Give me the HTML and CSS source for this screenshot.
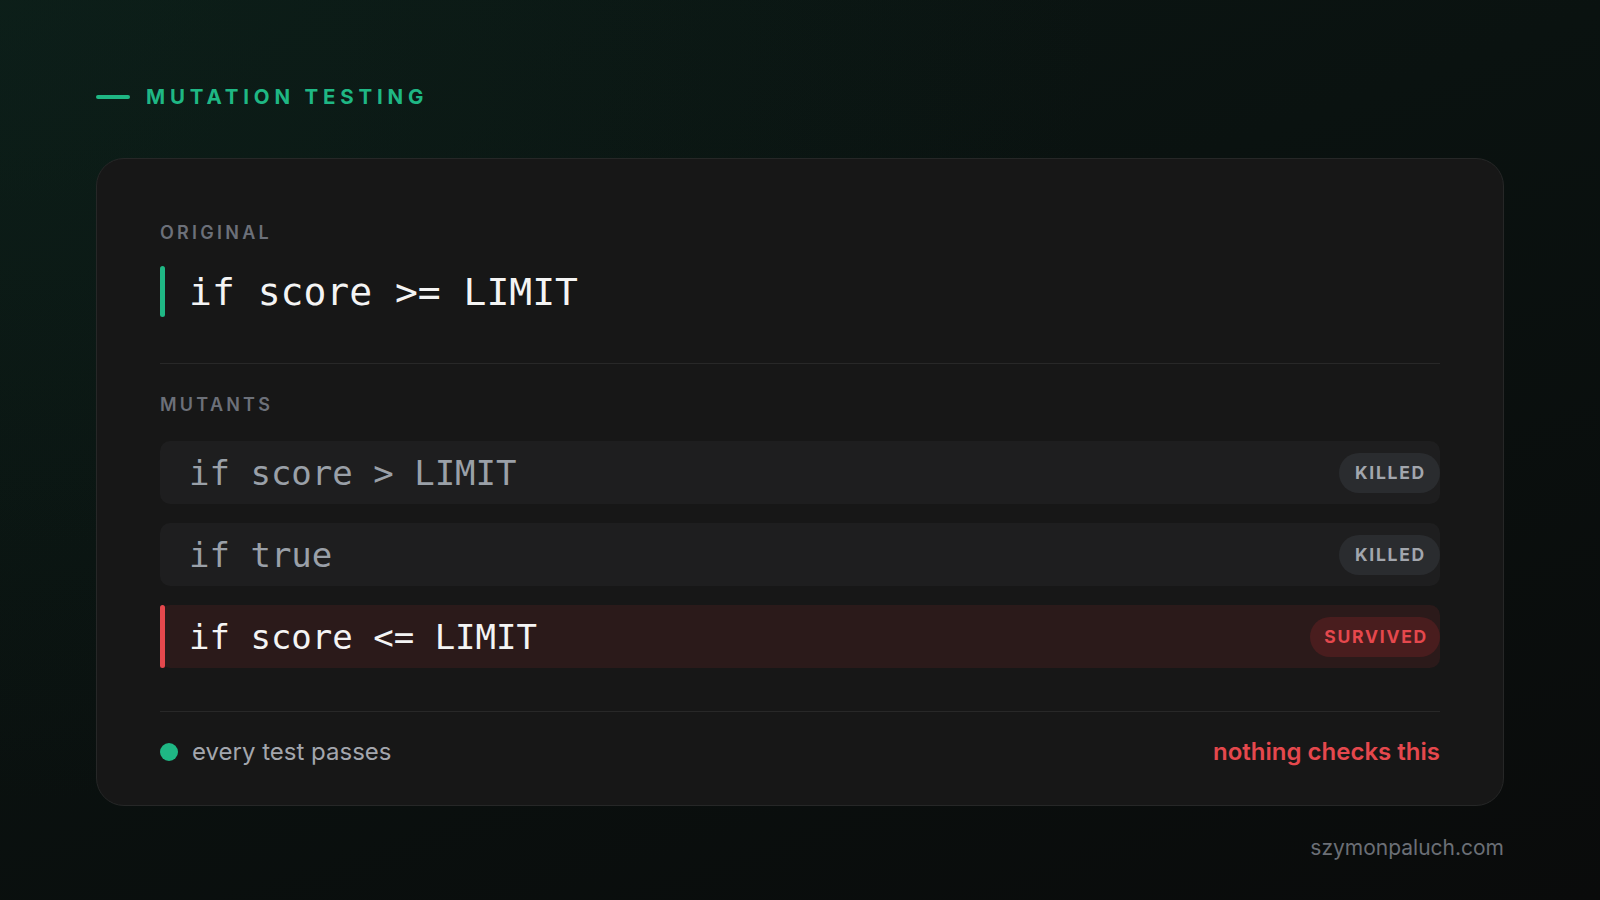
FILE: index.html
```html
<!DOCTYPE html>
<html lang="en">
<head>
<meta charset="utf-8">
<title>Mutation testing</title>
<link rel="stylesheet" href="styles.css">
</head>
<body>
<div class="page">
  <header class="heading">
    <span class="heading-line"></span>
    <span class="heading-text">MUTATION TESTING</span>
  </header>

  <section class="card">
    <div class="label">ORIGINAL</div>
    <div class="original">
      <span class="bar bar-green"></span>
      <code class="code code-lg">if score &gt;= LIMIT</code>
    </div>

    <hr class="divider divider-top">

    <div class="label">MUTANTS</div>
    <div class="mutants">
      <div class="mutant">
        <span class="bar"></span>
        <code class="code code-md muted">if score &gt; LIMIT</code>
        <span class="badge badge-killed">KILLED</span>
      </div>
      <div class="mutant">
        <span class="bar"></span>
        <code class="code code-md muted">if true</code>
        <span class="badge badge-killed">KILLED</span>
      </div>
      <div class="mutant mutant-survived">
        <span class="bar bar-red"></span>
        <code class="code code-md">if score &lt;= LIMIT</code>
        <span class="badge badge-survived">SURVIVED</span>
      </div>
    </div>

    <hr class="divider divider-bottom">

    <div class="status">
      <div class="status-left">
        <span class="dot"></span>
        <span class="status-text">every test passes</span>
      </div>
      <div class="status-warn">nothing checks this</div>
    </div>
  </section>

  <footer class="site">szymonpaluch.com</footer>
</div>
</body>
</html>
```

FILE: styles.css
```css
* { box-sizing: border-box; }

html, body {
  margin: 0;
  padding: 0;
  width: 1600px;
  height: 900px;
  overflow: hidden;
}

body {
  font-family: Inter, "Noto Sans", "Liberation Sans", sans-serif;
  background:
    radial-gradient(ellipse 1100px 800px at 0% 0%, rgba(14, 40, 31, 0.45), rgba(14, 40, 31, 0) 100%),
    linear-gradient(160deg, #0b1714 0%, #0a1210 40%, #0a0b0b 100%);
  color: #f2f2f2;
}

.page {
  width: 1600px;
  height: 900px;
  padding: 85px 96px 0;
  display: flex;
  flex-direction: column;
}

.heading {
  display: flex;
  align-items: center;
  gap: 16px;
  height: 24px;
  margin-bottom: 49px;
}

.heading-line {
  width: 34px;
  height: 4px;
  border-radius: 2px;
  background: #1fb784;
}

.heading-text {
  font-size: 20.5px;
  line-height: 24px;
  font-weight: 700;
  letter-spacing: 0.235em;
  color: #1fb784;
}

.card {
  background: #171717;
  border: 1px solid #262727;
  border-radius: 28px;
  padding: 63px 63px 38px;
  display: flex;
  flex-direction: column;
}

.label {
  font-size: 18px;
  line-height: 22px;
  font-weight: 600;
  letter-spacing: 0.18em;
  color: #6c7079;
}

.original {
  display: flex;
  align-items: stretch;
  height: 51px;
  margin-top: 22px;
}

.bar {
  width: 5px;
  flex: 0 0 5px;
  border-radius: 3px;
  background: transparent;
}

.bar-green { background: #1fb784; }
.bar-red { background: #e5484d; }

.code {
  font-family: "DejaVu Sans Mono", "Liberation Mono", monospace;
  white-space: pre;
  margin-left: 24px;
  display: flex;
  align-items: center;
}

.code-lg {
  font-size: 38px;
  color: #f4f4f4;
}

.code-md {
  font-size: 34px;
  color: #f4f4f4;
}

.code.muted { color: #9aa0a8; }

.divider {
  border: 0;
  height: 1px;
  margin: 0;
  background: #282828;
}

.divider-top { margin-top: 46px; margin-bottom: 30px; }
.divider-bottom { margin-top: 43px; }

.mutants {
  display: flex;
  flex-direction: column;
  gap: 19px;
  margin-top: 25px;
}

.mutant {
  display: flex;
  align-items: stretch;
  height: 63px;
  background: #1e1e1f;
  border-radius: 10px;
}

.mutant-survived {
  background: #2b1a1a;
}

.badge {
  margin-left: auto;
  align-self: center;
  height: 40px;
  padding: 0 14px 0 16px;
  border-radius: 20px;
  display: flex;
  align-items: center;
  font-size: 17.5px;
  font-weight: 700;
  letter-spacing: 0.1em;
}

.badge-killed {
  background: #2a2c2f;
  color: #a2a6ad;
}

.badge-survived {
  background: #491d1e;
  color: #e5484d;
  padding: 0 12px 0 14px;
}

.status {
  display: flex;
  align-items: center;
  justify-content: space-between;
  height: 30px;
  margin-top: 25px;
}

.status-left {
  display: flex;
  align-items: center;
  gap: 14px;
}

.dot {
  width: 18px;
  height: 18px;
  border-radius: 50%;
  background: #1fb784;
}

.status-text {
  font-size: 24px;
  line-height: 30px;
  color: #a3a6ad;
}

.status-warn {
  font-size: 24px;
  line-height: 30px;
  font-weight: 600;
  color: #e5484d;
}

.site {
  margin-top: 29px;
  align-self: flex-end;
  font-size: 21px;
  line-height: 26px;
  color: #6b6f76;
}
```
